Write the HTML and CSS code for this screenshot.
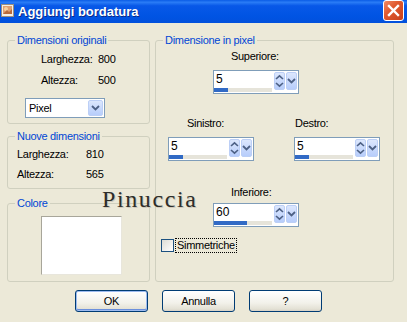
FILE: index.html
```html
<!DOCTYPE html>
<html>
<head>
<meta charset="utf-8">
<link rel="stylesheet" href="styles.css">
</head>
<body>
<div class="window">
  <div class="titlebar">
    <svg class="appicon" width="15" height="15" viewBox="0 0 15 15">
      <rect x="1.5" y="1.5" width="12" height="12" fill="#f4efe4" stroke="#9a8f80"/>
      <rect x="3" y="3" width="9" height="8" fill="#e0a070"/>
      <circle cx="6" cy="6" r="2" fill="#f6d0a0"/>
      <path d="M3 11 L7 7 L9 9 L12 6 L12 11 Z" fill="#b86a3a"/>
    </svg>
    <span class="title">Aggiungi bordatura</span>
    <div class="close">
      <svg width="21" height="21" viewBox="0 0 21 21">
        <path d="M6 6 L15 15 M15 6 L6 15" stroke="#fff" stroke-width="2.4" stroke-linecap="square"/>
      </svg>
    </div>
  </div>
  <div class="client">
    <div class="groups">
      <div class="leftcol">
        <fieldset class="group g-orig">
          <legend>Dimensioni originali</legend>
          <div class="kv kv-orig">
            <span>Larghezza:</span><span>800</span>
            <span>Altezza:</span><span>500</span>
          </div>
          <div class="select">
            <span class="select-text">Pixel</span>
            <span class="dropbtn big">
              <svg width="9" height="6" viewBox="0 0 9 6"><path d="M1 1 L4.5 4.5 L8 1" fill="none" stroke="#4d6185" stroke-width="1.8"/></svg>
            </span>
          </div>
        </fieldset>
        <fieldset class="group g-new">
          <legend>Nuove dimensioni</legend>
          <div class="kv kv-new">
            <span>Larghezza:</span><span>810</span>
            <span>Altezza:</span><span>565</span>
          </div>
        </fieldset>
        <fieldset class="group g-color">
          <legend>Colore</legend>
          <div class="swatch"></div>
        </fieldset>
      </div>
      <fieldset class="group g-pixel">
        <legend>Dimensione in pixel</legend>
        <div class="field f-top">
          <div class="flabel l-top">Superiore:</div>
          <div class="spin">
            <div class="spin-main">
              <div class="spin-val">5</div>
              <div class="spin-track"><div class="spin-bar" style="width:14px"></div></div>
            </div>
            <span class="spinbtn"><svg width="9" height="14" viewBox="0 0 9 14"><path d="M1 5 L4.5 1.8 L8 5 M1 9 L4.5 12.2 L8 9" fill="none" stroke="#4d6185" stroke-width="1.6"/></svg></span>
            <span class="dropbtn"><svg width="9" height="6" viewBox="0 0 9 6"><path d="M1 1 L4.5 4.5 L8 1" fill="none" stroke="#4d6185" stroke-width="1.8"/></svg></span>
          </div>
        </div>
        <div class="midrow">
          <div class="field f-left">
            <div class="flabel l-left">Sinistro:</div>
            <div class="spin">
              <div class="spin-main">
                <div class="spin-val">5</div>
                <div class="spin-track"><div class="spin-bar" style="width:14px"></div></div>
              </div>
              <span class="spinbtn"><svg width="9" height="14" viewBox="0 0 9 14"><path d="M1 5 L4.5 1.8 L8 5 M1 9 L4.5 12.2 L8 9" fill="none" stroke="#4d6185" stroke-width="1.6"/></svg></span>
              <span class="dropbtn"><svg width="9" height="6" viewBox="0 0 9 6"><path d="M1 1 L4.5 4.5 L8 1" fill="none" stroke="#4d6185" stroke-width="1.8"/></svg></span>
            </div>
          </div>
          <div class="field f-right">
            <div class="flabel l-right">Destro:</div>
            <div class="spin">
              <div class="spin-main">
                <div class="spin-val">5</div>
                <div class="spin-track"><div class="spin-bar" style="width:14px"></div></div>
              </div>
              <span class="spinbtn"><svg width="9" height="14" viewBox="0 0 9 14"><path d="M1 5 L4.5 1.8 L8 5 M1 9 L4.5 12.2 L8 9" fill="none" stroke="#4d6185" stroke-width="1.6"/></svg></span>
              <span class="dropbtn"><svg width="9" height="6" viewBox="0 0 9 6"><path d="M1 1 L4.5 4.5 L8 1" fill="none" stroke="#4d6185" stroke-width="1.8"/></svg></span>
            </div>
          </div>
        </div>
        <div class="field f-bottom">
          <div class="flabel l-bottom">Inferiore:</div>
          <div class="spin">
            <div class="spin-main">
              <div class="spin-val">60</div>
              <div class="spin-track"><div class="spin-bar" style="width:33px"></div></div>
            </div>
            <span class="spinbtn"><svg width="9" height="14" viewBox="0 0 9 14"><path d="M1 5 L4.5 1.8 L8 5 M1 9 L4.5 12.2 L8 9" fill="none" stroke="#4d6185" stroke-width="1.6"/></svg></span>
            <span class="dropbtn"><svg width="9" height="6" viewBox="0 0 9 6"><path d="M1 1 L4.5 4.5 L8 1" fill="none" stroke="#4d6185" stroke-width="1.8"/></svg></span>
          </div>
        </div>
        <div class="check">
          <span class="checkbox"></span>
          <span class="check-label">Simmetriche</span>
        </div>
      </fieldset>
    </div>
    <div class="buttons">
      <div class="btn default">OK</div>
      <div class="btn">Annulla</div>
      <div class="btn">?</div>
    </div>
  </div>
  <div class="watermark">Pinuccia</div>
</div>
</body>
</html>
```
FILE: styles.css
```css
html, body {
  margin: 0;
  padding: 0;
  background: #ece9d8;
}
body {
  font-family: "Liberation Sans", Arial, sans-serif;
  font-size: 11px;
  letter-spacing: -0.3px;
  color: #000;
}
.window {
  position: relative;
  width: 407px;
  height: 322px;
  overflow: hidden;
  background: #ece9d8;
}
.titlebar {
  height: 23px;
  display: flex;
  align-items: center;
  background: linear-gradient(#0a5ce6 0%, #2a7cf6 10%, #0858e8 25%, #0054e3 70%, #0250dc 100%);
}
.appicon {
  margin-left: 0px;
  margin-top: -3px;
  flex: none;
}
.title {
  margin-left: 3px;
  color: #fff;
  font-weight: bold;
  font-size: 13px;
  letter-spacing: 0;
  text-shadow: 1px 1px 0 #0a2a8a;
  flex: 1;
}
.close {
  width: 19px;
  height: 19px;
  margin-right: 3px;
  margin-top: -2px;
  border: 1px solid #fff;
  border-radius: 3px;
  background: linear-gradient(135deg, #f08a64 0%, #e05a30 40%, #c8401c 100%);
  display: flex;
  align-items: center;
  justify-content: center;
  overflow: hidden;
}
.close svg { display: block; flex: none; }
.client {
  padding: 11px 13px 0 7px;
}
.groups {
  display: flex;
  gap: 5px;
}
.leftcol {
  width: 143px;
  display: flex;
  flex-direction: column;
}
.group {
  margin: 0;
  padding: 0;
  border: 1px solid #d0d0bf;
  border-radius: 3px;
  min-width: 0;
}
.group legend {
  margin-left: 7px;
  padding: 0 2px;
  color: #0046d5;
  font-size: 11px;
  line-height: 13px;
}
.kv {
  display: grid;
  grid-auto-rows: 21px;
  align-items: center;
}
.kv-orig {
  grid-template-columns: 57px auto;
  padding-left: 33px;
  margin-top: 1px;
}
.kv-new {
  grid-template-columns: 69px auto;
  grid-auto-rows: 20px;
  padding-left: 9px;
  margin-top: 1px;
  margin-bottom: 4px;
}
.select {
  margin: 8px 0 5px 17px;
  width: 78px;
  height: 18px;
  border: 1px solid #7f9db9;
  background: #fff;
  display: flex;
  align-items: center;
}
.select-text {
  flex: 1;
  padding-left: 3px;
}
.dropbtn {
  width: 11px;
  height: 16px;
  margin: 1px 1px 1px 0;
  border-radius: 2px;
  background: linear-gradient(#dce7fd, #b7cdfb);
  border: 1px solid #bccff6;
  box-sizing: border-box;
  display: flex;
  align-items: center;
  justify-content: center;
}
.dropbtn.big {
  width: 15px;
}
.dropbtn svg, .spinbtn svg { display: block; }
.g-new { margin-top: 6px; }
.g-color { margin-top: 8px; flex: 1; }
.swatch {
  margin: 6px 0 6px 33px;
  width: 79px;
  height: 57px;
  background: #fff;
  border: 1px solid #a8a69a;
  border-right-color: #e8e6dc;
  border-bottom-color: #e8e6dc;
}
.g-pixel {
  flex: 1;
  display: flex;
  flex-direction: column;
}
.field {
  display: flex;
  flex-direction: column;
  align-items: flex-start;
}
.flabel {
  line-height: 14px;
}
.f-top { margin-left: 57px; margin-top: 2px; }
.l-top { margin-left: 18px; margin-bottom: 7px; }
.midrow {
  display: flex;
  margin-top: 22px;
}
.f-left { margin-left: 12px; }
.l-left { margin-left: 19px; margin-bottom: 7px; }
.f-right { margin-left: 40px; }
.l-right { margin-left: 1px; margin-bottom: 7px; }
.f-bottom { margin-left: 57px; margin-top: 24px; }
.l-bottom { margin-left: 18px; margin-bottom: 4px; }
.spin {
  width: 84px;
  height: 22px;
  border: 1px solid #7f9db9;
  background: #fff;
  display: flex;
  align-items: flex-start;
}
.spin-main {
  flex: 1;
  display: flex;
  flex-direction: column;
}
.spin-val {
  height: 17px;
  line-height: 17px;
  padding-left: 2px;
  font-size: 12px;
  letter-spacing: 0;
}
.spin-track {
  height: 4px;
  margin-right: 2px;
  background: #e6e4da;
}
.spin-bar {
  height: 4px;
  background: #316ac5;
}
.spinbtn {
  width: 11px;
  height: 18px;
  margin-top: 1px;
  margin-right: 1px;
  border-radius: 2px;
  background: linear-gradient(#dce7fd, #b7cdfb);
  border: 1px solid #bccff6;
  box-sizing: border-box;
  display: flex;
  align-items: center;
  justify-content: center;
}
.spin .dropbtn {
  height: 18px;
  margin-top: 1px;
}
.check {
  display: flex;
  align-items: center;
  margin: 12px 0 0 5px;
}
.checkbox {
  width: 11px;
  height: 11px;
  border: 1px solid #1c5180;
  background: linear-gradient(135deg, #dcdcd5, #fff);
}
.check-label {
  margin-left: 2px;
  padding: 0 1px;
  line-height: 13px;
  outline: 1px dotted #000;
}
.buttons {
  display: flex;
  gap: 14px;
  padding: 8px 0 0 68px;
}
.btn {
  width: 71px;
  height: 20px;
  border: 1px solid #003c74;
  border-radius: 3px;
  background: linear-gradient(#ffffff, #f2f1ea 60%, #e3e1d5 90%, #d6d0c5);
  display: flex;
  align-items: center;
  justify-content: center;
}
.btn.default {
  box-shadow: inset 0 0 0 1px #9dbbf0, inset 0 -1px 0 1px #6b8fdc;
}
.watermark {
  position: absolute;
  left: 102px;
  top: 186px;
  font-family: "Liberation Serif", "Times New Roman", serif;
  font-size: 24px;
  letter-spacing: 1.6px;
  color: #2e2e2a;
  text-shadow: 1px 1px 0 #cfcabb;
}
```
